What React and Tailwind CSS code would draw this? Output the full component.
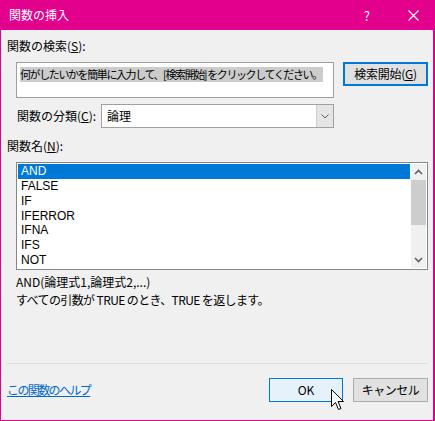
import React from "react";

const font = { fontFamily: '"Noto Sans CJK JP", "Noto Sans", sans-serif' };

function Chevron({ up }) {
  return (
    <svg width="9" height="6" viewBox="0 0 9 6" className="block">
      <path
        d={up ? "M1 5 L4.5 1.5 L8 5" : "M1 1 L4.5 4.5 L8 1"}
        fill="none"
        stroke="#606060"
        strokeWidth="1.6"
      />
    </svg>
  );
}

export default function App() {
  const names = ["AND", "FALSE", "IF", "IFERROR", "IFNA", "IFS", "NOT"];

  return (
    <div
      className="w-[435px] h-[421px] flex flex-col bg-[#e3008c] text-[12px] text-[#000] overflow-hidden"
      style={font}
    >
      {/* title bar */}
      <div className="h-[30px] flex items-center pl-[9px] pr-[16px] text-white shrink-0">
        <span className="text-[12px] leading-none">関数の挿入</span>
        <span className="ml-auto text-[13px] leading-none mr-[38px]">?</span>
        <svg width="11" height="11" viewBox="0 0 11 11">
          <path d="M0.5 0.5 L10.5 10.5 M10.5 0.5 L0.5 10.5" stroke="white" strokeWidth="1.2" />
        </svg>
      </div>

      {/* body */}
      <div className="flex-1 ml-[1px] mr-[2px] mb-[1px] bg-[#f0f0f0] flex flex-col pl-[6px] relative">
        <div className="mt-[8px] h-[16px] leading-[16px]">
          関数の検索(<span className="underline">S</span>):
        </div>

        <div className="mt-[8px] flex">
          <div className="ml-[9px] w-[318px] h-[36px] border border-[#a0a0a0] bg-white pl-[3px] pt-[2px] overflow-hidden">
            <span className="bg-[#cccccc] text-[11px] leading-[15px] tracking-[-1.4px] whitespace-nowrap inline-block pr-[1px]">
              何がしたいかを簡単に入力して、[検索開始] をクリックしてください。
            </span>
          </div>
          <button className="ml-[9px] w-[85px] h-[24px] border-2 border-[#0078d7] bg-[#e1e1e1] text-[12px] leading-none flex items-center justify-center tracking-[-0.3px]">
            検索開始(<span className="underline">G</span>)
          </button>
        </div>

        <div className="mt-[6px] flex items-center ml-[10px]">
          <span className="w-[84px] leading-[16px]">
            関数の分類(<span className="underline">C</span>):
          </span>
          <div className="w-[233px] h-[24px] border border-[#a0a0a0] bg-white flex">
            <span className="flex-1 pl-[5px] leading-[22px]">論理</span>
            <div className="w-[17px] h-full bg-[#e5e5e5] border-l border-[#cfcfcf] flex items-center justify-center">
              <svg width="8" height="5" viewBox="0 0 8 5">
                <path d="M0.5 0.5 L4 4 L7.5 0.5" fill="none" stroke="#606060" strokeWidth="1" />
              </svg>
            </div>
          </div>
        </div>

        <div className="mt-[10px] h-[16px] leading-[16px]">
          関数名(<span className="underline">N</span>):
        </div>

        <div className="mt-[8px] ml-[9px] w-[412px] h-[108px] border border-[#828790] bg-white flex p-[1px]">
          <div className="flex-1 flex flex-col font-['Liberation_Sans',Arial,sans-serif] text-[12px]">
            {names.map((n, i) => (
              <div
                key={n}
                className={
                  i === 0
                    ? "h-[15px] leading-[15px] pl-[3px] bg-[#0078d7] text-white overflow-hidden"
                    : "h-[15px] leading-[15px] pl-[3px] overflow-hidden"
                }
              >
                {n}
              </div>
            ))}
          </div>
          <div className="w-[15px] ml-[1px] bg-[#f0f0f0] flex flex-col items-center">
            <div className="h-[16px] flex items-center justify-center">
              <Chevron up />
            </div>
            <div className="w-full h-[45px] bg-[#cdcdcd]" />
            <div className="flex-1" />
            <div className="h-[16px] flex items-center justify-center">
              <Chevron />
            </div>
          </div>
        </div>

        <div className="mt-[3px] ml-[9px] leading-[18px]">
          <div>AND(論理式1,論理式2,...)</div>
          <div className="tracking-[-0.6px]">すべての引数が TRUE のとき、TRUE を返します。</div>
        </div>

        <div className="mt-[54px] w-[421px] h-[1px] bg-[#dadada]" />

        <div className="mt-[14px] flex items-center">
          <a className="text-[#0066cc] underline leading-[16px] mt-[-1px] tracking-[-1.6px]" href="#">
            この関数のヘルプ
          </a>
          <button className="ml-auto w-[74px] h-[24px] border border-[#0078d7] bg-[#e5f1fb] leading-none">
            OK
          </button>
          <button className="ml-[10px] mr-[5px] w-[75px] h-[24px] border border-[#adadad] bg-[#e1e1e1] leading-none tracking-[-0.5px]">
            キャンセル
          </button>
        </div>

        {/* mouse pointer */}
        <svg
          className="absolute left-[330px] top-[359px]"
          width="14"
          height="24"
          viewBox="0 0 14 24"
        >
          <path
            d="M0.5 0.5 L0.5 17.5 L4.5 13.5 L7.5 20.5 L10 19.5 L7 12.5 L12.5 12.5 Z"
            fill="white"
            stroke="black"
            strokeWidth="1"
          />
        </svg>
      </div>
    </div>
  );
}
